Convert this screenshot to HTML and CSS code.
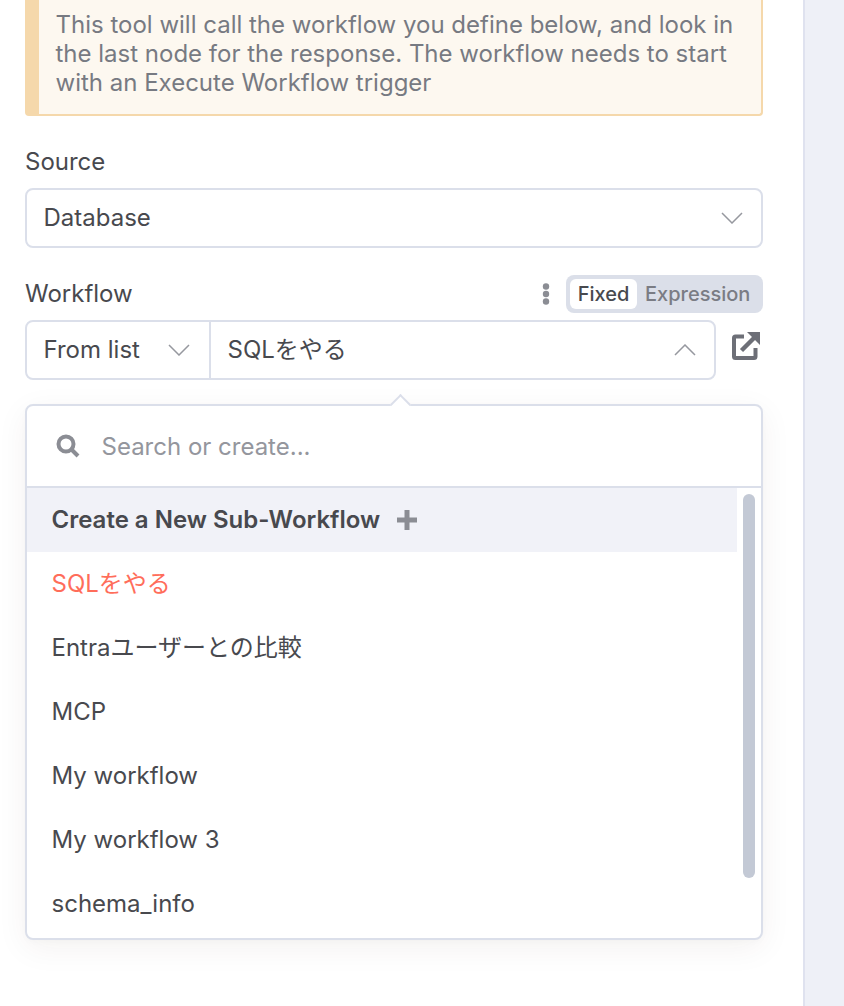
FILE: index.html
```html
<!DOCTYPE html>
<html>
<head>
    <title>Workflow tool settings</title>
    <link rel="stylesheet" href="styles.css">
</head>
<body>
    <div class="layout">
        <main class="panel">
            <div class="callout">
                This tool will call the workflow you define below, and look in the last node for the response. The workflow needs to start with an Execute Workflow trigger
            </div>

            <div class="field source-field">
                <div class="field-label">Source</div>
                <div class="select-box">
                    <span>Database</span>
                    <svg class="chevron" viewBox="0 0 22 12"><path d="M1 1l10 10L21 1"/></svg>
                </div>
            </div>

            <div class="field workflow-field">
                <div class="field-head">
                    <div class="field-label">Workflow</div>
                    <div class="field-tools">
                        <svg class="dots" viewBox="0 0 8 22"><circle cx="4" cy="3.5" r="3.2"/><circle cx="4" cy="11" r="3.2"/><circle cx="4" cy="18.5" r="3.2"/></svg>
                        <div class="toggle">
                            <span class="toggle-on">Fixed</span>
                            <span class="toggle-off">Expression</span>
                        </div>
                    </div>
                </div>
                <div class="locator-row">
                    <div class="locator">
                        <div class="locator-mode">
                            <span>From list</span>
                            <svg class="chevron" viewBox="0 0 22 12"><path d="M1 1l10 10L21 1"/></svg>
                        </div>
                        <div class="locator-value">
                            <span>SQLをやる</span>
                            <svg class="chevron" viewBox="0 0 22 12"><path d="M1 11L11 1l10 10"/></svg>
                        </div>
                    </div>
                    <svg class="open-icon" viewBox="0 0 28 28">
                        <path class="open-box" d="M12 4.500H3.500a1.500 1.500 0 0 0-1.500 1.500v18.500a1.500 1.500 0 0 0 1.500 1.500H22a1.500 1.500 0 0 0 1.500-1.500V16"/>
                        <path class="open-line" d="M9.500 18.500L23 5"/>
                        <path class="open-head" d="M15 0H28V13z"/>
                    </svg>
                </div>
            </div>

            <div class="dropdown">
                <div class="dropdown-arrow"></div>
                <div class="search-row">
                    <svg class="search-icon" viewBox="0 0 24 24"><circle cx="10" cy="10" r="7.500"/><path d="M15.500 15.500L22 22"/></svg>
                    <span class="search-text">Search or create...</span>
                </div>
                <div class="list">
                    <div class="list-item create-item">
                        <span>Create a New Sub-Workflow</span>
                        <svg class="plus-icon" viewBox="0 0 22 22"><path d="M11 1v20M1 11h20"/></svg>
                    </div>
                    <div class="list-item selected-item">SQLをやる</div>
                    <div class="list-item">Entraユーザーとの比較</div>
                    <div class="list-item">MCP</div>
                    <div class="list-item">My workflow</div>
                    <div class="list-item">My workflow 3</div>
                    <div class="list-item">schema_info</div>
                    <div class="scrollbar"></div>
                </div>
            </div>
        </main>
        <aside class="sidebar"></aside>
    </div>
</body>
</html>
```

FILE: styles.css
```css
html, body {
    height: 100%;
}

body {
    margin: 0;
    background-color: #fff;
    color: #48494e;
    font-family: Inter, "Noto Sans CJK JP", sans-serif;
    font-size: 24px;
    line-height: 30px;
    overflow: hidden;
}

.layout {
    display: flex;
    height: 1006px;
}

.panel {
    width: 738px;
    padding: 0 40px 0 25px;
    flex-shrink: 0;
}

.sidebar {
    flex: 1;
    background-color: #eef0f7;
    border-left: 2px solid #dfe2ef;
}

/* Info callout, cut off by the top of the window */
.callout {
    height: 116px;
    box-sizing: border-box;
    padding: 10px 18px 0 16.5px;
    background-color: #fdf8f0;
    border: 2px solid #f5d8ab;
    border-top: 0;
    border-left-width: 14px;
    border-radius: 0 0 4px 4px;
    color: #777a82;
    line-height: 29px;
}

.source-field {
    margin-top: 31px;
}

.source-field .select-box {
    margin-top: 11px;
}

.select-box {
    display: flex;
    align-items: center;
    justify-content: space-between;
    height: 60px;
    box-sizing: border-box;
    padding: 0 18px 0 16.5px;
    border: 2px solid #dbdfea;
    border-radius: 8px;
}

.chevron {
    width: 22px;
    height: 12px;
    fill: none;
    stroke: #96989f;
    stroke-width: 1.500;
}

.workflow-field {
    margin-top: 27px;
}

.field-head {
    display: flex;
    align-items: center;
    justify-content: space-between;
    height: 38px;
}

.field-tools {
    display: flex;
    align-items: center;
    gap: 16px;
}

.dots {
    width: 8px;
    height: 22px;
    fill: #8b8d94;
}

.toggle {
    display: flex;
    align-items: center;
    width: 197px;
    height: 38px;
    box-sizing: border-box;
    padding: 4px;
    background-color: #dbdfe9;
    border-radius: 8px;
    font-size: 20px;
    font-weight: 500;
}

.toggle-on {
    width: 67px;
    height: 30px;
    line-height: 30px;
    text-align: center;
    background-color: #fff;
    border-radius: 6px;
}

.toggle-off {
    margin-left: 8px;
    color: #7a7c84;
}

.locator-row {
    display: flex;
    align-items: flex-start;
    margin-top: 7px;
}

.locator {
    display: flex;
    width: 691px;
    height: 60px;
    box-sizing: border-box;
    border: 2px solid #dbdfea;
    border-radius: 8px;
}

.locator-mode {
    display: flex;
    align-items: center;
    justify-content: space-between;
    width: 184px;
    flex-shrink: 0;
    padding: 0 19px 0 16.5px;
    box-sizing: border-box;
    border-right: 2px solid #dbdfea;
}

.locator-value {
    display: flex;
    align-items: center;
    justify-content: space-between;
    flex: 1;
    padding: 0 18px 0 16.5px;
}

.open-icon {
    width: 28px;
    height: 28px;
    margin: 12px 0 0 16px;
}

.open-box {
    fill: none;
    stroke: #6d6f77;
    stroke-width: 4;
}

.open-line {
    fill: none;
    stroke: #6d6f77;
    stroke-width: 4.500;
}

.open-head {
    fill: #6d6f77;
}

.dropdown {
    position: relative;
    margin-top: 24px;
    height: 536px;
    box-sizing: border-box;
    background-color: #fff;
    border: 2px solid #dbdfea;
    border-radius: 8px;
    box-shadow: 0 8px 32px rgba(68, 28, 23, 0.06), 0 2px 6px rgba(68, 28, 23, 0.02);
}

.dropdown-arrow {
    position: absolute;
    top: -9px;
    left: 366px;
    width: 13px;
    height: 13px;
    background-color: #fff;
    border-top: 2px solid #dbdfea;
    border-left: 2px solid #dbdfea;
    transform: rotate(45deg);
}

.search-row {
    display: flex;
    align-items: center;
    height: 80px;
    padding-left: 29px;
    border-bottom: 2px solid #dbdfea;
    color: #94969d;
}

.search-icon {
    width: 24px;
    height: 24px;
    margin-right: 21.5px;
    fill: none;
    stroke: #8b8d94;
    stroke-width: 4;
}

.search-text {
    margin-top: 2px;
}

.list {
    position: relative;
}

.list-item {
    display: flex;
    align-items: center;
    width: 710px;
    height: 64px;
    box-sizing: border-box;
    padding-left: 24.5px;
}

.create-item {
    background-color: #f1f2f8;
    font-weight: 600;
}

.plus-icon {
    width: 22px;
    height: 22px;
    margin-left: 15.5px;
    fill: none;
    stroke: #8b8d94;
    stroke-width: 5;
}

.selected-item {
    color: #ff6d5a;
}

.scrollbar {
    position: absolute;
    top: 6px;
    left: 716px;
    width: 12px;
    height: 384px;
    background-color: #c3c9d5;
    border-radius: 6px;
}
```
